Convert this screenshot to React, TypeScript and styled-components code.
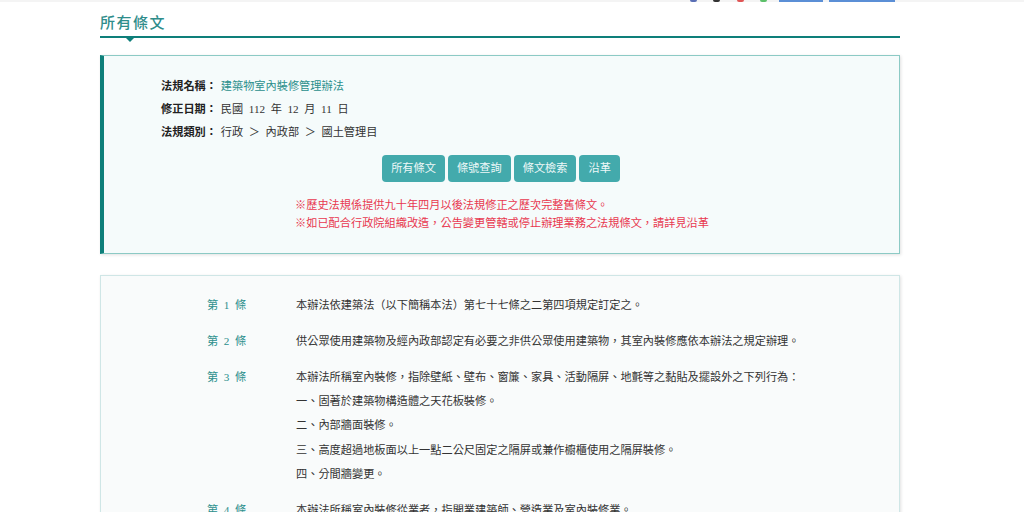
import React from 'react';
import styled, { createGlobalStyle } from 'styled-components';

const Global = createGlobalStyle`
  html, body {
    margin: 0;
    padding: 0;
    height: 512px;
    overflow: hidden;
    background: #fff;
  }
  body {
    font-family: "Liberation Serif", "Noto Sans CJK TC", serif;
    font-size: 11.2px;
    color: #333;
  }
`;

const TopStrip = styled.div`
  height: 2px;
  background: #f4f4f4;
  display: flex;
  justify-content: flex-end;
  padding-right: 129px;
`;

const ShareDots = styled.div`
  display: flex;
  gap: 16.5px;
  margin-right: 12px;
`;

const ShareDot = styled.span<{ $color: string }>`
  width: 7px;
  height: 2px;
  border-radius: 0 0 4px 4px;
  background: ${(p) => p.$color};
`;

const ShareBtn = styled.span<{ $width: number }>`
  width: ${(p) => p.$width}px;
  height: 2px;
  margin-left: 6px;
  background: #5b8fd6;

  &:first-of-type {
    margin-left: 0;
  }
`;

const Wrap = styled.main`
  width: 800px;
  margin-left: 100px;
`;

const TitleBar = styled.h2`
  position: relative;
  margin: 11px 0 17px;
  height: 23px;
  border-bottom: 2px solid #0e7f7a;
  color: #2f8d8b;
  font-family: "Noto Sans CJK TC", sans-serif;
  font-size: 15px;
  font-weight: 500;
  line-height: 17px;
  letter-spacing: 1.5px;

  &::after {
    content: '';
    position: absolute;
    left: 24px;
    top: 100%;
    border: 6px solid transparent;
    border-top: 6px solid #0e7f7a;
    border-bottom: 0;
  }
`;

const InfoPanel = styled.section`
  height: 199px;
  box-sizing: border-box;
  border: 1px solid #8ccac5;
  border-left: 4px solid #0e7f7a;
  background: #f5fbfb;
  box-shadow: 1px 1px 3px rgba(0, 0, 0, 0.12);
  padding: 18.5px 0 0 57px;
`;

const InfoRow = styled.div`
  height: 23px;
  line-height: 23px;
  white-space: pre;
`;

const InfoLabel = styled.b`
  color: #222;
  margin-right: 1px;
`;

const LawLink = styled.a`
  color: #2b8f8c;
`;

const Tabs = styled.div`
  display: flex;
  justify-content: center;
  gap: 3px;
  margin: 11.5px 0 0 -58px;
`;

const Tab = styled.a`
  padding: 0 9px;
  height: 27px;
  line-height: 27px;
  border-radius: 4px;
  background: #43aaac;
  color: #eef8f8;
`;

const Notices = styled.div`
  margin: 14px 0 0 134px;
  color: #e8384f;
  line-height: 18px;
`;

const ArticlePanel = styled.section`
  margin-top: 21px;
  box-sizing: border-box;
  border: 1px solid #cfe6e6;
  background: #f9fbfb;
  box-shadow: 1px 1px 3px rgba(0, 0, 0, 0.12);
  padding: 16.5px 0 0 106px;
  height: 400px;
`;

const Article = styled.div`
  display: flex;
  margin-bottom: 11.6px;
`;

const ArticleNo = styled.a`
  flex: 0 0 89px;
  color: #2b8f8c;
  line-height: 24.4px;
  white-space: pre;
`;

const ArticleBody = styled.div`
  line-height: 24.4px;
  color: #333;
`;

const articles: { no: number; lines: string[] }[] = [
  { no: 1, lines: ['本辦法依建築法\uFF08以下簡稱本法\uFF09第七十七條之二第四項規定訂定之。'] },
  { no: 2, lines: ['供公眾使用建築物及經內政部認定有必要之非供公眾使用建築物\uFF0C其室內裝修應依本辦法之規定辦理。'] },
  {
    no: 3,
    lines: [
      '本辦法所稱室內裝修\uFF0C指除壁紙、壁布、窗簾、家具、活動隔屏、地氈等之黏貼及擺設外之下列行為\uFF1A',
      '一、固著於建築物構造體之天花板裝修。',
      '二、內部牆面裝修。',
      '三、高度超過地板面以上一點二公尺固定之隔屏或兼作櫥櫃使用之隔屏裝修。',
      '四、分間牆變更。',
    ],
  },
  { no: 4, lines: ['本辦法所稱室內裝修從業者\uFF0C指開業建築師、營造業及室內裝修業。'] },
];

export default function App() {
  return (
    <>
      <Global />
      <TopStrip>
        <ShareDots>
          <ShareDot $color="#5a6fb5" />
          <ShareDot $color="#333" />
          <ShareDot $color="#e05555" />
          <ShareDot $color="#5cc06a" />
        </ShareDots>
        <ShareBtn $width={44} />
        <ShareBtn $width={66} />
      </TopStrip>
      <Wrap>
        <TitleBar>所有條文</TitleBar>
        <InfoPanel>
          <InfoRow>
            <InfoLabel>{'法規名稱\uFF1A'}</InfoLabel> <LawLink>建築物室內裝修管理辦法</LawLink>
          </InfoRow>
          <InfoRow>
            <InfoLabel>{'修正日期\uFF1A'}</InfoLabel> {'民國  112  年  12  月  11  日'}
          </InfoRow>
          <InfoRow>
            <InfoLabel>{'法規類別\uFF1A'}</InfoLabel> {'行政  \uFF1E  內政部  \uFF1E  國土管理目'}
          </InfoRow>
          <Tabs>
            <Tab>所有條文</Tab>
            <Tab>條號查詢</Tab>
            <Tab>條文檢索</Tab>
            <Tab>沿革</Tab>
          </Tabs>
          <Notices>
            <div>※歷史法規係提供九十年四月以後法規修正之歷次完整舊條文。</div>
            <div>{'※如已配合行政院組織改造\uFF0C公告變更管轄或停止辦理業務之法規條文\uFF0C請詳見沿革'}</div>
          </Notices>
        </InfoPanel>
        <ArticlePanel>
          {articles.map((a) => (
            <Article key={a.no}>
              <ArticleNo>{`第  ${a.no}  條`}</ArticleNo>
              <ArticleBody>
                {a.lines.map((l) => (
                  <div key={l}>{l}</div>
                ))}
              </ArticleBody>
            </Article>
          ))}
        </ArticlePanel>
      </Wrap>
    </>
  );
}
